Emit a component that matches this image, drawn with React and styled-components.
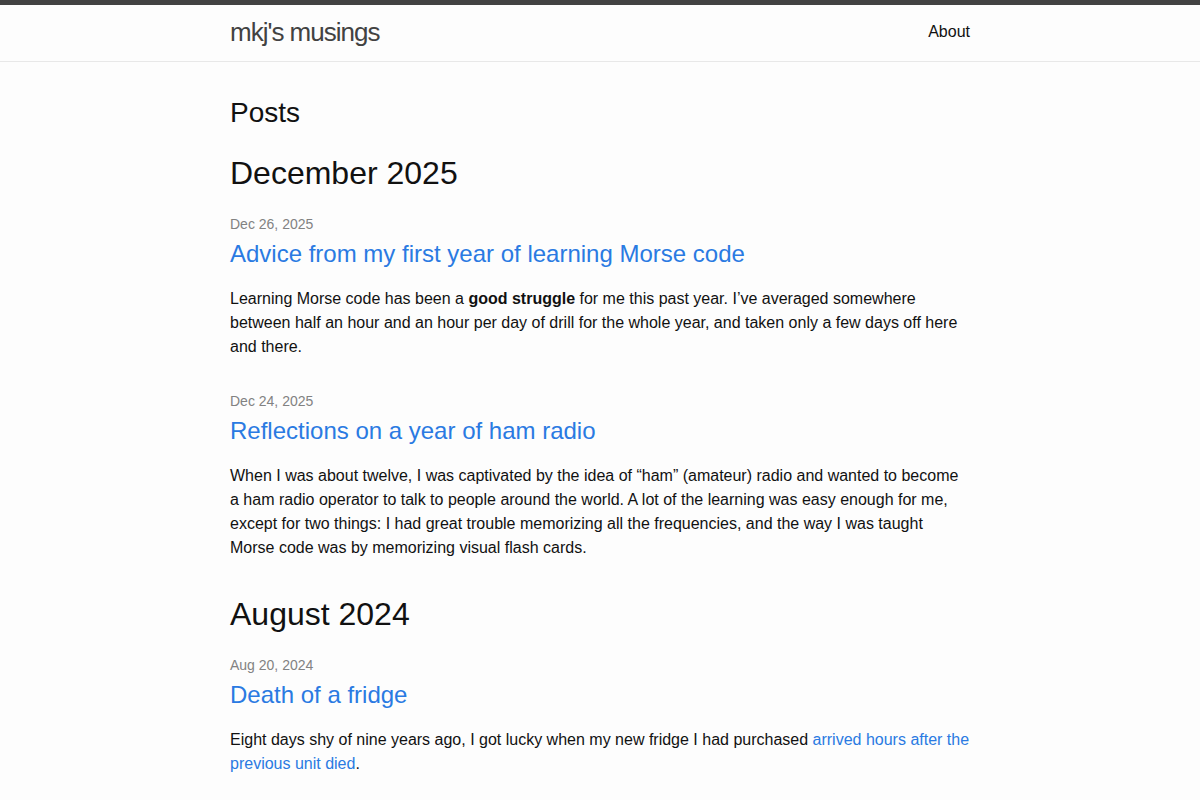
import React from 'react'
import styled, { createGlobalStyle } from 'styled-components'

const GlobalStyle = createGlobalStyle`
  html, body {
    margin: 0;
    padding: 0;
  }
  body {
    background: #fdfdfd;
    color: #111;
    font: 400 16px/1.5 "Liberation Sans", Arial, Helvetica, sans-serif;
  }
`

const Wrapper = styled.div`
  max-width: 740px;
  margin: 0 auto;
  padding: 0 30px;
`

const Header = styled.header`
  border-top: 5px solid #424242;
  border-bottom: 1px solid #e8e8e8;
  min-height: 56px;
`

const HeaderInner = styled(Wrapper)`
  display: flex;
  align-items: flex-start;
  justify-content: space-between;
  height: 56px;
`

const SiteTitle = styled.a`
  font-size: 26px;
  font-weight: 300;
  letter-spacing: -1px;
  line-height: 54px;
  color: #424242;
  text-decoration: none;
`

const NavLink = styled.a`
  display: block;
  color: #111;
  line-height: 53px;
  text-decoration: none;
`

const Main = styled.main`
  padding: 30px 0;
`

const PageHeading = styled.h2`
  font-size: 28px;
  font-weight: 400;
  margin: 0 0 15px;
`

const MonthHeading = styled.h2`
  font-size: 32px;
  font-weight: 400;
  line-height: 48px;
  margin: 0 0 15px;
`

const PostList = styled.ul`
  list-style: none;
  margin: 0 0 30px;
  padding: 0;
`

const PostItem = styled.li`
  margin-bottom: 30px;

  &:last-child {
    margin-bottom: 0;
  }
`

const PostMeta = styled.span`
  font-size: 14px;
  color: #828282;
`

const PostTitle = styled.h3`
  margin: 0 0 15px;
  font-weight: 400;
`

const PostLink = styled.a`
  display: block;
  font-size: 24px;
  line-height: 36px;
  color: #2a7ae2;
  text-decoration: none;
`

const Excerpt = styled.p`
  margin: 0;
`

const InlineLink = styled.a`
  color: #2a7ae2;
  text-decoration: none;
`

const months = [
  {
    name: 'December 2025',
    posts: [
      {
        date: 'Dec 26, 2025',
        title: 'Advice from my first year of learning Morse code',
        excerpt: (
          <>
            Learning Morse code has been a <strong>good struggle</strong> for me this past
            year. I’ve averaged somewhere between half an hour and an hour per day of drill
            for the whole year, and taken only a few days off here and there.
          </>
        ),
      },
      {
        date: 'Dec 24, 2025',
        title: 'Reflections on a year of ham radio',
        excerpt: (
          <>
            When I was about twelve, I was captivated by the idea of “ham” (amateur) radio
            and wanted to become a ham radio operator to talk to people around the world. A
            lot of the learning was easy enough for me, except for two things: I had great
            trouble memorizing all the frequencies, and the way I was taught Morse code was
            by memorizing visual flash cards.
          </>
        ),
      },
    ],
  },
  {
    name: 'August 2024',
    posts: [
      {
        date: 'Aug 20, 2024',
        title: 'Death of a fridge',
        excerpt: (
          <>
            Eight days shy of nine years ago, I got lucky when my new fridge I had purchased{' '}
            <InlineLink href="#">arrived hours after the previous unit died</InlineLink>.
          </>
        ),
      },
    ],
  },
]

const App = () => {
  return (
    <>
      <GlobalStyle />
      <Header>
        <HeaderInner>
          <SiteTitle href="#">mkj's musings</SiteTitle>
          <nav>
            <NavLink href="#">About</NavLink>
          </nav>
        </HeaderInner>
      </Header>
      <Main>
        <Wrapper>
          <PageHeading>Posts</PageHeading>
          {months.map((month) => (
            <section key={month.name}>
              <MonthHeading>{month.name}</MonthHeading>
              <PostList>
                {month.posts.map((post) => (
                  <PostItem key={post.title}>
                    <PostMeta>{post.date}</PostMeta>
                    <PostTitle>
                      <PostLink href="#">{post.title}</PostLink>
                    </PostTitle>
                    <Excerpt>{post.excerpt}</Excerpt>
                  </PostItem>
                ))}
              </PostList>
            </section>
          ))}
        </Wrapper>
      </Main>
    </>
  )
}

export default App
